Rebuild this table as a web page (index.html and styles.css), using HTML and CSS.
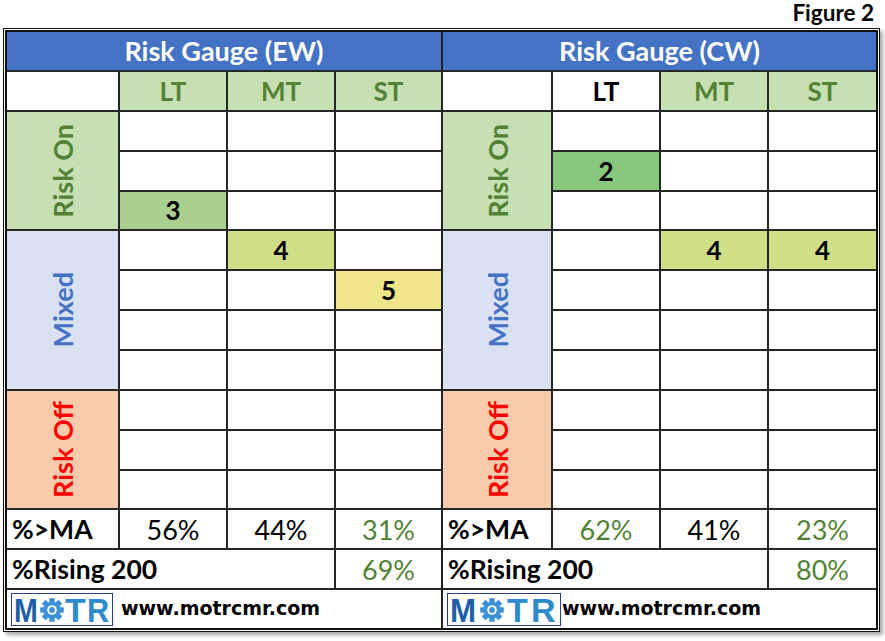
FILE: index.html
```html
<!DOCTYPE html>
<html lang="en">
<head>
<meta charset="utf-8">
<title>Risk Gauge</title>
<link rel="stylesheet" href="styles.css">
</head>
<body>
<div class="fig">Figure 2</div>
<div class="frame">
  <div class="board">
    <section class="panel panel-ew">
      <div class="title">Risk Gauge (EW)</div>
      <div class="cell"></div>
      <div class="cell hd">LT</div>
      <div class="cell hd">MT</div>
      <div class="cell hd">ST</div>

      <div class="zone on"><span>Risk On</span></div>
      <div class="cell"></div><div class="cell"></div><div class="cell"></div>
      <div class="cell"></div><div class="cell"></div><div class="cell"></div>
      <div class="cell num g3">3</div><div class="cell"></div><div class="cell"></div>

      <div class="zone mixed"><span>Mixed</span></div>
      <div class="cell"></div><div class="cell num y4">4</div><div class="cell"></div>
      <div class="cell"></div><div class="cell"></div><div class="cell num y5">5</div>
      <div class="cell"></div><div class="cell"></div><div class="cell"></div>
      <div class="cell"></div><div class="cell"></div><div class="cell"></div>

      <div class="zone off"><span>Risk Off</span></div>
      <div class="cell"></div><div class="cell"></div><div class="cell"></div>
      <div class="cell"></div><div class="cell"></div><div class="cell"></div>
      <div class="cell"></div><div class="cell"></div><div class="cell"></div>

      <div class="cell lbl">%&gt;MA</div>
      <div class="cell pct">56%</div>
      <div class="cell pct">44%</div>
      <div class="cell pct up">31%</div>

      <div class="cell lbl wide">%Rising 200</div>
      <div class="cell pct up">69%</div>

      <div class="cell foot">
        <div class="logo logo-ew">
          <span class="lm">M</span>
          <svg class="gear" viewBox="-12 -12 24 24" aria-hidden="true">
            <g fill="#3b90d8">
              <rect x="-2.7" y="-11.8" width="5.4" height="6" rx="0.8"/>
              <rect x="-2.7" y="-11.8" width="5.4" height="6" rx="0.8" transform="rotate(45)"/>
              <rect x="-2.7" y="-11.8" width="5.4" height="6" rx="0.8" transform="rotate(90)"/>
              <rect x="-2.7" y="-11.8" width="5.4" height="6" rx="0.8" transform="rotate(135)"/>
              <rect x="-2.7" y="-11.8" width="5.4" height="6" rx="0.8" transform="rotate(180)"/>
              <rect x="-2.7" y="-11.8" width="5.4" height="6" rx="0.8" transform="rotate(225)"/>
              <rect x="-2.7" y="-11.8" width="5.4" height="6" rx="0.8" transform="rotate(270)"/>
              <rect x="-2.7" y="-11.8" width="5.4" height="6" rx="0.8" transform="rotate(315)"/>
              <circle r="8.6"/>
            </g>
            <circle r="4.8" fill="#fff"/>
            <circle r="2.9" fill="#3b90d8"/>
          </svg>
          <span class="lt">T</span>
          <span class="lr">R</span>
        </div>
        <span class="url">www.motrcmr.com</span>
      </div>
    </section>

    <section class="panel panel-cw">
      <div class="title">Risk Gauge (CW)</div>
      <div class="cell"></div>
      <div class="cell hd plain">LT</div>
      <div class="cell hd">MT</div>
      <div class="cell hd">ST</div>

      <div class="zone on"><span>Risk On</span></div>
      <div class="cell"></div><div class="cell"></div><div class="cell"></div>
      <div class="cell num g2">2</div><div class="cell"></div><div class="cell"></div>
      <div class="cell"></div><div class="cell"></div><div class="cell"></div>

      <div class="zone mixed"><span>Mixed</span></div>
      <div class="cell"></div><div class="cell num y4">4</div><div class="cell num y4">4</div>
      <div class="cell"></div><div class="cell"></div><div class="cell"></div>
      <div class="cell"></div><div class="cell"></div><div class="cell"></div>
      <div class="cell"></div><div class="cell"></div><div class="cell"></div>

      <div class="zone off"><span>Risk Off</span></div>
      <div class="cell"></div><div class="cell"></div><div class="cell"></div>
      <div class="cell"></div><div class="cell"></div><div class="cell"></div>
      <div class="cell"></div><div class="cell"></div><div class="cell"></div>

      <div class="cell lbl">%&gt;MA</div>
      <div class="cell pct up">62%</div>
      <div class="cell pct">41%</div>
      <div class="cell pct up">23%</div>

      <div class="cell lbl wide">%Rising 200</div>
      <div class="cell pct up">80%</div>

      <div class="cell foot">
        <div class="logo logo-cw">
          <span class="lm">M</span>
          <svg class="gear" viewBox="-12 -12 24 24" aria-hidden="true">
            <g fill="#3b90d8">
              <rect x="-2.7" y="-11.8" width="5.4" height="6" rx="0.8"/>
              <rect x="-2.7" y="-11.8" width="5.4" height="6" rx="0.8" transform="rotate(45)"/>
              <rect x="-2.7" y="-11.8" width="5.4" height="6" rx="0.8" transform="rotate(90)"/>
              <rect x="-2.7" y="-11.8" width="5.4" height="6" rx="0.8" transform="rotate(135)"/>
              <rect x="-2.7" y="-11.8" width="5.4" height="6" rx="0.8" transform="rotate(180)"/>
              <rect x="-2.7" y="-11.8" width="5.4" height="6" rx="0.8" transform="rotate(225)"/>
              <rect x="-2.7" y="-11.8" width="5.4" height="6" rx="0.8" transform="rotate(270)"/>
              <rect x="-2.7" y="-11.8" width="5.4" height="6" rx="0.8" transform="rotate(315)"/>
              <circle r="8.6"/>
            </g>
            <circle r="4.8" fill="#fff"/>
            <circle r="2.9" fill="#3b90d8"/>
          </svg>
          <span class="lt">T</span>
          <span class="lr">R</span>
        </div>
        <span class="url">www.motrcmr.com</span>
      </div>
    </section>
  </div>
</div>
</body>
</html>
```

FILE: styles.css
```css
* { box-sizing: border-box; }

html, body {
  margin: 0;
  padding: 0;
  background: #ffffff;
}

body {
  font-family: Lato, "Open Sans", sans-serif;
  color: #000;
  width: 885px;
  height: 641px;
  overflow: hidden;
}

.fig {
  height: 28px;
  line-height: 25px;
  font-size: 22.5px;
  font-weight: 700;
  text-align: right;
  padding-right: 11px;
}

.frame {
  margin-left: 3px;
  width: 877px;
  border: 1px solid #111;
  padding: 1px;
  background: #fff;
  box-shadow: 3px 3px 4px rgba(0, 0, 0, 0.35);
}

.board {
  display: flex;
  gap: 2px;
  background: #222;
  border: 2px solid #111;
  height: 600px;
}

.panel {
  display: grid;
  grid-template-rows: 38px repeat(14, 1fr);
  gap: 2px;
  background: #262626;
}

.panel-ew {
  width: 434px;
  grid-template-columns: 111px 106px 106px 1fr;
}

.panel-cw {
  flex: 1;
  grid-template-columns: 108px 106px 106px 1fr;
}

.title {
  grid-column: 1 / -1;
  background: #4472c4;
  color: #fff;
  font-size: 27px;
  font-weight: 700;
  display: flex;
  align-items: center;
  justify-content: center;
  padding-bottom: 2px;
}

.cell {
  background: #fff;
  display: flex;
  align-items: center;
  justify-content: center;
}

.hd {
  background: #c6e0b4;
  color: #548235;
  font-size: 26px;
  font-weight: 700;
}

.hd.plain {
  background: #fff;
  color: #000;
}

.zone {
  display: flex;
  align-items: center;
  justify-content: center;
  font-size: 27px;
  font-weight: 700;
}

.zone span {
  writing-mode: vertical-rl;
  transform: rotate(180deg);
  white-space: nowrap;
}

.zone.on {
  grid-row: span 3;
  background: #c6e0b4;
  color: #548235;
}

.zone.mixed {
  grid-row: span 4;
  background: #d9e1f2;
  color: #4472c4;
}

.zone.off {
  grid-row: span 3;
  background: #f8cbad;
  color: #ff0000;
}

.num {
  font-size: 26px;
  font-weight: 700;
}

.g3 { background: #a9d08e; }
.g2 { background: #86c77c; }
.y4 { background: #d0df86; }
.y5 { background: #efe58a; }

.lbl {
  justify-content: flex-start;
  padding-left: 5px;
  font-size: 26.5px;
  font-weight: 700;
}

.wide {
  grid-column: span 3;
}

.pct {
  font-size: 27px;
  font-weight: 400;
}

.pct.up {
  color: #548235;
}

.foot {
  grid-column: 1 / -1;
  justify-content: flex-start;
  padding-left: 4px;
  gap: 8px;
}

.panel-cw .foot { gap: 1px; padding-left: 4px; }

.logo {
  height: 33px;
  border: 1.5px solid #2e3a8c;
  background: #fff;
  display: flex;
  align-items: center;
  font-family: "Liberation Sans", Arial, sans-serif;
  font-weight: 700;
  font-size: 34px;
  line-height: 1;
  padding-top: 2px;
}

.logo-ew { width: 102px; padding-left: 2px; }
.logo-cw { width: 114px; padding-left: 2px; }

.lm,
.lt,
.lr {
  display: inline-block;
  transform-origin: left center;
}

.lm { color: #1b5fab; width: 24px; transform: scaleX(0.84); }
.lt { color: #2e8bcb; width: 22px; transform: scaleX(1); }
.lr { color: #2e8bcb; width: 22px; transform: scaleX(0.9); }

.logo-ew .gear { margin: 0 1px 0 2px; }
.logo-cw .lm { width: 27px; transform: scaleX(0.92); }
.logo-cw .gear { margin: 0 3px 0 3px; }
.logo-cw .lt { width: 24px; }
.logo-cw .lr { transform: scaleX(1); }

.gear {
  width: 24px;
  height: 24px;
  flex: none;
}

.url {
  font-family: "DejaVu Sans", Verdana, sans-serif;
  font-weight: 700;
  font-size: 19px;
  padding-bottom: 2px;
}
```
